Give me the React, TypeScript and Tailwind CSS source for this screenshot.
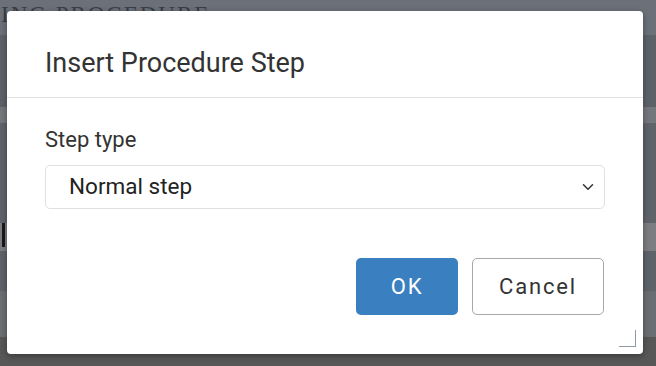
import { ChevronDown } from "lucide-react";

// Modal sits over a dimmed procedure page; only edges of the page show.
export default function App() {
  return (
    <div className="relative h-[366px] w-[656px] overflow-hidden bg-[#6b7079] font-['Roboto',sans-serif]">
      <div className="flex h-full flex-col">
        <div className="h-[35px] overflow-hidden">
          <div className="-mt-[2px] ml-[1px] font-['Liberation_Serif',serif] text-[23px] uppercase tracking-[2px] text-[#3a3e46]">
            ing Procedure
          </div>
        </div>
        <div className="h-[72px] bg-[#5d6269]" />
        <div className="h-[16px] bg-[#74777b]" />
        <div className="h-[100px] bg-[#5f646b]" />
        <div className="h-[28px] bg-[#7b7d80]">
          <span className="block h-[24px] w-[3px] translate-x-[2px] bg-[#1a1a1a]" />
        </div>
        <div className="h-[40px] bg-[#5e636a]" />
        <div className="h-[46px] bg-[#6a6d71]" />
        <div className="flex-1 bg-[#575757]" />
      </div>

      <div className="absolute top-[11px] left-[7px] flex h-[343px] w-[636px] flex-col rounded-[4px] bg-white shadow-[0_2px_6px_rgba(0,0,0,0.35)]">
        <div className="flex h-[87px] shrink-0 items-center border-b border-[#e3e3e3] pt-[18px] pl-[38px]">
          <h2 className="text-[27px] leading-[32px] text-[#333]">Insert Procedure Step</h2>
        </div>
        <div className="flex flex-1 flex-col px-[38px] pt-[28px]">
          <label className="text-[22px] leading-[28px] text-[#333]">Step type</label>
          <div className="mt-[11px] flex h-[44px] items-center justify-between rounded-[5px] border border-[#e0e0e0] pr-[7px] pl-[23px]">
            <span className="text-[22.5px] text-[#222]">Normal step</span>
            <ChevronDown className="h-[18px] w-[18px] text-[#333]" strokeWidth={2} />
          </div>
          <div className="mt-[49px] flex justify-end gap-[14px] pr-[1px]">
            <button
              type="button"
              className="h-[57px] w-[102px] rounded-[5px] bg-[#3a7fbf] text-[22px] tracking-[1.8px] text-white"
            >
              OK
            </button>
            <button
              type="button"
              className="h-[57px] w-[132px] rounded-[5px] border border-[#a8a8a8] bg-white text-[22px] tracking-[1.8px] text-[#333]"
            >
              Cancel
            </button>
          </div>
        </div>
        <div className="absolute right-[7px] bottom-[7px] h-[17px] w-[17px] border-r border-b border-[#8b9aa8]" />
      </div>
    </div>
  );
}
